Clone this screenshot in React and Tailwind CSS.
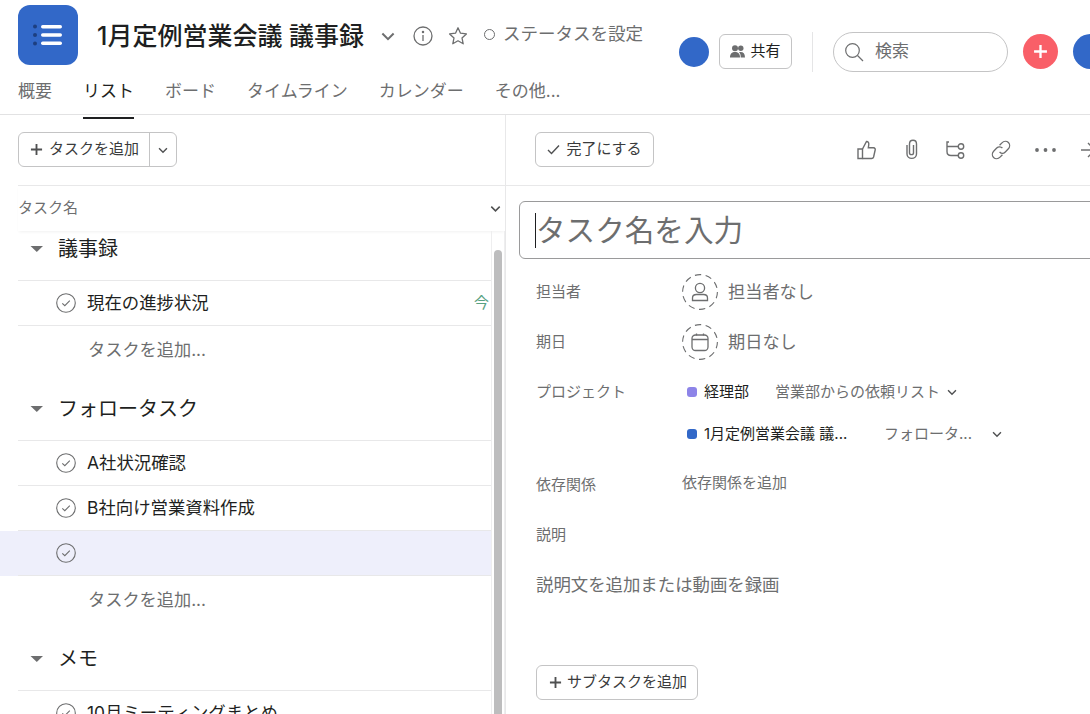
const F = '"Inter","Noto Sans CJK JP",sans-serif';

function Chev({ size = 16, className = "" }) {
  return (
    <svg width={size} height={size} viewBox="0 0 16 16" fill="none" stroke="currentColor" strokeWidth="1.6" className={className}>
      <path d="M3.5 6 L8 10.5 L12.5 6" />
    </svg>
  );
}

function Check() {
  return (
    <svg width="20" height="20" viewBox="0 0 20 20" fill="none" stroke="#6d6e6f" className="shrink-0">
      <circle cx="10" cy="10" r="9.3" strokeWidth="1.1" />
      <path d="M6.3 10.3 L8.8 12.7 L13.8 7.6" strokeWidth="1.1" />
    </svg>
  );
}

function Caret() {
  return (
    <svg width="14" height="8" viewBox="0 0 14 8" className="shrink-0">
      <path d="M0.5 1 H13 L6.8 7 Z" fill="#6d6e6f" />
    </svg>
  );
}

function Plus({ size = 14, color = "#4f5051", sw = 2 }) {
  return (
    <svg width={size} height={size} viewBox="0 0 14 14" fill="none" stroke={color} strokeWidth={sw}>
      <path d="M7 1 V13 M1 7 H13" />
    </svg>
  );
}

function Section({ title }) {
  return (
    <div className="h-[65px] border-b border-[#e8e8e9] ml-[18px] flex items-center pt-[1px]">
      <div className="ml-[12px] mr-[14px] flex"><Caret /></div>
      <span className="text-[20px] text-[#1e1f21]">{title}</span>
    </div>
  );
}

function Row({ text, active, tag }) {
  return (
    <div className={active ? "bg-[#eeeffb] pl-[18px]" : "pl-[18px]"}>
      <div className="h-[45px] border-b border-[#e8e8e9] flex items-center pl-[38px] pr-[2px]">
        <Check />
        <span className="ml-[11px] text-[17.4px] text-[#1e1f21] flex-1 whitespace-nowrap">{text}</span>
        {tag && <span className="text-[15px] text-[#58a182]">今</span>}
      </div>
    </div>
  );
}

function AddRow() {
  return <div className="h-[50px] pl-[88px] pb-[2px] flex items-center text-[17.2px] text-[#6d6e6f]">タスクを追加...</div>;
}

function Tabs() {
  const items = ["概要", "リスト", "ボード", "タイムライン", "カレンダー", "その他..."];
  return (
    <div className="flex gap-[31px] pl-[18px] h-[40px] border-b border-[#e2e2e3] text-[17px] text-[#6d6e6f]">
      {items.map((t, i) => (
        <div key={t} className={i === 1 ? "relative z-10 pt-[4px] text-[#1e1f21]" : "pt-[4px]"}>
          {t}
          {i === 1 && <span className="absolute left-0 right-0 -bottom-[5px] h-[2px] bg-[#1e1f21]" />}
        </div>
      ))}
    </div>
  );
}

function Header() {
  return (
    <div className="h-[75px] flex overflow-hidden">
      <div className="w-[60px] h-[60px] mt-[5px] ml-[18px] rounded-[12px] bg-[#3268c8] shrink-0 flex items-center justify-center">
        <svg width="32" height="24" viewBox="0 0 32 24">
          <g fill="#1d3f80">
            <circle cx="3" cy="3.5" r="2" /><circle cx="3" cy="12" r="2" /><circle cx="3" cy="20.5" r="2" />
          </g>
          <g fill="#fff">
            <rect x="9" y="2" width="21" height="3.4" rx="1.7" /><rect x="9" y="10.3" width="21" height="3.4" rx="1.7" /><rect x="9" y="18.6" width="21" height="3.4" rx="1.7" />
          </g>
        </svg>
      </div>
      <div className="ml-[19px] mt-[18px] flex items-start h-[36px] shrink-0">
        <span className="text-[25px] leading-[36px] font-medium text-[#1e1f21] w-[270px] whitespace-nowrap">1月定例営業会議 議事録</span>
        <Chev size={20} className="text-[#6d6e6f] ml-[11px] mt-[8px]" />
        <svg width="20" height="20" viewBox="0 0 20 20" fill="none" stroke="#6d6e6f" strokeWidth="1.3" className="ml-[15px] mt-[8px]">
          <circle cx="10" cy="10" r="9" />
          <path d="M10 9 V15" /><circle cx="10" cy="6" r="0.6" fill="#6d6e6f" />
        </svg>
        <svg width="20" height="20" viewBox="0 0 20 20" fill="none" stroke="#6d6e6f" strokeWidth="1.3" className="ml-[15px] mt-[8px]">
          <path d="M10 1.8 L12.5 7.2 L18.4 7.9 L14 11.9 L15.2 17.8 L10 14.8 L4.8 17.8 L6 11.9 L1.6 7.9 L7.5 7.2 Z" strokeLinejoin="round" />
        </svg>
        <span className="ml-[16px] mt-[11px] w-[11px] h-[11px] rounded-full border border-[#6d6e6f]" />
        <span className="ml-[8px] text-[17.5px] leading-[32px] text-[#6d6e6f] whitespace-nowrap">ステータスを設定</span>
      </div>
      <div className="flex items-start ml-[36px] mt-[32px] shrink-0">
        <div className="w-[30px] h-[30px] mt-[5px] rounded-full bg-[#3268c8]" />
        <div className="ml-[10px] mt-[2px] w-[73px] h-[35px] border border-[#c4c4c5] rounded-[6px] flex items-center justify-center gap-[5px]">
          <svg width="15" height="13" viewBox="0 0 15 13" fill="#6d6e6f">
            <circle cx="5" cy="3.2" r="3" /><circle cx="10.8" cy="3.2" r="2.7" />
            <path d="M0 12.5 C0 8.5 2 7 5 7 C8 7 10 8.5 10 12.5 Z" /><path d="M10.7 12.5 C10.8 10 10.3 8.3 9 7.2 C12.5 6.3 15 8 15 12.5 Z" />
          </svg>
          <span className="text-[15px] text-[#1e1f21]">共有</span>
        </div>
        <div className="ml-[20px] w-px h-[40px] bg-[#e5e5e6]" />
        <div className="ml-[20px] w-[175px] h-[40px] rounded-full border border-[#c4c4c5] flex items-center pl-[10px]">
          <svg width="20" height="20" viewBox="0 0 20 20" fill="none" stroke="#6d6e6f" strokeWidth="1.2">
            <circle cx="8.5" cy="8.5" r="6.8" /><path d="M13.5 13.5 L19 19" />
          </svg>
          <span className="ml-[11px] text-[17px] text-[#6d6e6f]">検索</span>
        </div>
        <div className="ml-[15px] mt-[2px] w-[35px] h-[35px] rounded-full bg-[#f95f68] flex items-center justify-center">
          <Plus size={15} color="#fff" sw={2.2} />
        </div>
        <div className="ml-[15px] mt-[2px] w-[35px] h-[35px] rounded-full bg-[#3268c8] shrink-0" />
      </div>
    </div>
  );
}

function LeftPane() {
  return (
    <div className="w-[506px] shrink-0 border-r border-[#e8e8e9] relative overflow-hidden h-[599px]">
      <div className="h-[70px] pl-[18px] pt-[17px]">
        <div className="inline-flex h-[35px] w-[159px] border border-[#c4c4c5] rounded-[6px] text-[#1e1f21]">
          <div className="flex items-center pl-[11px] w-[130px] gap-[6px] shrink-0">
            <Plus size={13} />
            <span className="text-[15px] text-[#3a3b3c] whitespace-nowrap">タスクを追加</span>
          </div>
          <div className="border-l border-[#c4c4c5] flex-1 flex items-center justify-center text-[#4f5051]"><Chev size={14} /></div>
        </div>
      </div>
      <div className="ml-[18px] h-[46px] border-t border-[#e8e8e9] flex items-center justify-between pr-[1px] text-[15px] text-[#6d6e6f] shadow-[0_2px_3px_-1px_rgba(0,0,0,0.06)]">
        <span>タスク名</span>
        <Chev size={15} className="text-[#4f5051] mr-[1px]" />
      </div>
      <div className="absolute left-[494px] top-[135px] w-[8px] h-[470px] bg-[#bdbdbe] rounded-t-[4px]" />
      <div className="absolute left-[491px] top-[116px] w-[14px] h-[490px] border-l border-r border-[#eeeeef]" />
      <div className="w-[491px]">
        <div className="h-[50px] border-b border-[#e8e8e9] ml-[18px] flex items-center pb-[14px]">
          <div className="ml-[12px] mr-[14px] flex"><Caret /></div>
          <span className="text-[20px] text-[#1e1f21]">議事録</span>
        </div>
        <Row text="現在の進捗状況" tag />
        <AddRow />
        <Section title="フォロータスク" />
        <Row text="A社状況確認" />
        <Row text="B社向け営業資料作成" />
        <Row text="" active />
        <AddRow />
        <Section title="メモ" />
        <Row text="10月ミーティングまとめ" />
      </div>
    </div>
  );
}

function FieldRow({ label, icon, text }) {
  return (
    <div className="h-[50px] flex items-center">
      <span className="w-[176px] pl-[30px] text-[15px] text-[#6d6e6f] shrink-0">{label}</span>
      {icon}
      <span className="ml-[10px] text-[17.2px] text-[#6d6e6f]">{text}</span>
    </div>
  );
}

function Dashed({ children }) {
  return (
    <svg width="36" height="36" viewBox="0 0 36 36" fill="none" stroke="#6d6e6f" strokeWidth="1.1" className="shrink-0">
      <circle cx="18" cy="18" r="17.4" strokeDasharray="6.4 4.5" />
      {children}
    </svg>
  );
}

function RightPane() {
  const ic = { fill: "none", stroke: "#6d6e6f", strokeWidth: 1.4 };
  return (
    <div className="flex-1 min-w-0 overflow-hidden">
      <div className="h-[70px] pl-[29px] pt-[17px] flex items-start">
        <div className="w-[119px] h-[35px] shrink-0 border border-[#c4c4c5] rounded-[6px] flex items-center justify-center gap-[6px]">
          <svg width="13" height="11" viewBox="0 0 13 11" fill="none" stroke="#4f5051" strokeWidth="1.4"><path d="M1 6 L4.5 9.5 L12 1.5" /></svg>
          <span className="text-[15px] text-[#3a3b3c] whitespace-nowrap">完了にする</span>
        </div>
        <div className="mt-[7px] flex items-center shrink-0">
          <svg width="19" height="20" viewBox="0 0 19 20" {...ic} className="ml-[203px]">
            <path d="M1 9 H5.5 V18.5 H1 Z" />
            <path d="M5.5 9 L9.5 1.5 C11.5 1.5 12 3 11.7 5 L11.3 7.8 H16.5 C18 7.8 18.5 9 18.1 10.3 L16.6 17 C16.3 18 15.6 18.5 14.6 18.5 H5.5" />
          </svg>
          <svg width="14" height="21" viewBox="0 0 14 21" {...ic} className="ml-[28px]">
            <path d="M3 6 V15 C3 20.8 12.5 20.8 12.5 15 V5 C12.5 0 5.5 0 5.5 5 V14 C5.5 16.2 9.5 16.2 9.5 14 V6" />
          </svg>
          <svg width="19" height="18" viewBox="0 0 19 18" {...ic} className="ml-[28px]">
            <path d="M3 1 H1 V10.5 C1 13.5 2.5 14.5 5 14.5 H12 M1 5.5 H12" />
            <circle cx="15" cy="5.5" r="2.7" /><circle cx="15" cy="14.5" r="2.7" />
          </svg>
          <svg width="20" height="20" viewBox="0 0 21 21" {...ic} className="ml-[26px]">
            <path d="M9 5.5 L11.5 3 C13.5 1 16.5 1 18.3 2.7 C20 4.5 20 7.5 18 9.5 L15 12.5 C13 14.5 10.5 14 9 12.5" />
            <path d="M12 15.5 L9.5 18 C7.5 20 4.5 20 2.7 18.3 C1 16.5 1 13.5 3 11.5 L6 8.5 C8 6.5 10.5 7 12 8.5" />
          </svg>
          <svg width="21" height="4" viewBox="0 0 21 4" fill="#6d6e6f" className="ml-[24px]"><circle cx="2" cy="2" r="1.9" /><circle cx="10.5" cy="2" r="1.9" /><circle cx="19" cy="2" r="1.9" /></svg>
          <svg width="18" height="18" viewBox="0 0 18 18" {...ic} className="ml-[25px] shrink-0"><path d="M0 9 H16 M7 2 L14 9 L7 16" /></svg>
        </div>
      </div>
      <div className="h-[16px] border-t border-[#e8e8e9]" />
      <div className="ml-[13px] -mr-[20px] h-[58px] border border-[#9a9a9b] rounded-[6px] flex items-center pl-[15px]">
        <span className="w-px h-[35px] bg-[#1e1f21]" />
        <span className="text-[29.6px] text-[#6d6e6f] whitespace-nowrap">タスク名を入力</span>
      </div>
      <div className="mt-[8px]">
        <FieldRow label="担当者" text="担当者なし" icon={
          <Dashed>
            <g transform="translate(9 8)" strokeWidth="1.3">
              <circle cx="9" cy="6" r="4.6" /><path d="M1.5 18.5 V16 C1.5 13.5 3.5 12.5 5.5 12.5 H12.5 C14.5 12.5 16.5 13.5 16.5 16 V18.5 Z" />
            </g>
          </Dashed>} />
        <FieldRow label="期日" text="期日なし" icon={
          <Dashed>
            <g transform="translate(9 8.5)" strokeWidth="1.3">
              <rect x="1" y="2.5" width="16" height="15.5" rx="3.5" /><path d="M1 7 H17 M5.5 1 V3 M12.5 1 V3" />
            </g>
          </Dashed>} />
        <div className="h-[50px] flex items-center">
          <span className="w-[181px] pl-[30px] text-[15px] text-[#6d6e6f] shrink-0">プロジェクト</span>
          <span className="w-[10px] h-[10px] rounded-[3px] bg-[#8d84e8] shrink-0" />
          <span className="ml-[7px] w-[71px] text-[15px] text-[#1e1f21] shrink-0">経理部</span>
          <span className="text-[15px] text-[#6d6e6f] whitespace-nowrap">営業部からの依頼リスト</span>
          <Chev size={14} className="ml-[5px] text-[#4f5051]" />
        </div>
        <div className="h-[34px] flex items-center">
          <span className="w-[181px] shrink-0" />
          <span className="w-[10px] h-[10px] rounded-[3px] bg-[#3268c8] shrink-0" />
          <span className="ml-[7px] w-[180px] text-[15px] text-[#1e1f21] whitespace-nowrap shrink-0">1月定例営業会議 議...</span>
          <span className="text-[15px] text-[#6d6e6f] whitespace-nowrap w-[106px] shrink-0">フォロータ...</span>
          <Chev size={14} className="text-[#4f5051]" />
        </div>
        <div className="h-[51px] flex items-center mt-[8px]">
          <span className="w-[176px] pl-[30px] text-[15px] text-[#6d6e6f] shrink-0 pt-[1px]">依存関係</span>
          <span className="text-[15px] text-[#6d6e6f] pb-[2px]">依存関係を追加</span>
        </div>
        <div className="h-[50px] flex items-center pl-[30px] text-[15px] text-[#6d6e6f]">説明</div>
        <div className="pl-[30px] h-[105px] pt-[12px] text-[17.4px] text-[#6d6e6f]">説明文を追加または動画を録画</div>
        <div className="ml-[30px] w-[162px] h-[35px] border border-[#c4c4c5] rounded-[6px] flex items-center pl-[12px] gap-[5px]">
          <Plus size={13} />
          <span className="text-[15px] text-[#3a3b3c] whitespace-nowrap">サブタスクを追加</span>
        </div>
      </div>
    </div>
  );
}

export default function App() {
  return (
    <div className="w-[1090px] h-[714px] bg-white overflow-hidden" style={{ fontFamily: F }}>
      <Header />
      <Tabs />
      <div className="flex">
        <LeftPane />
        <RightPane />
      </div>
    </div>
  );
}
